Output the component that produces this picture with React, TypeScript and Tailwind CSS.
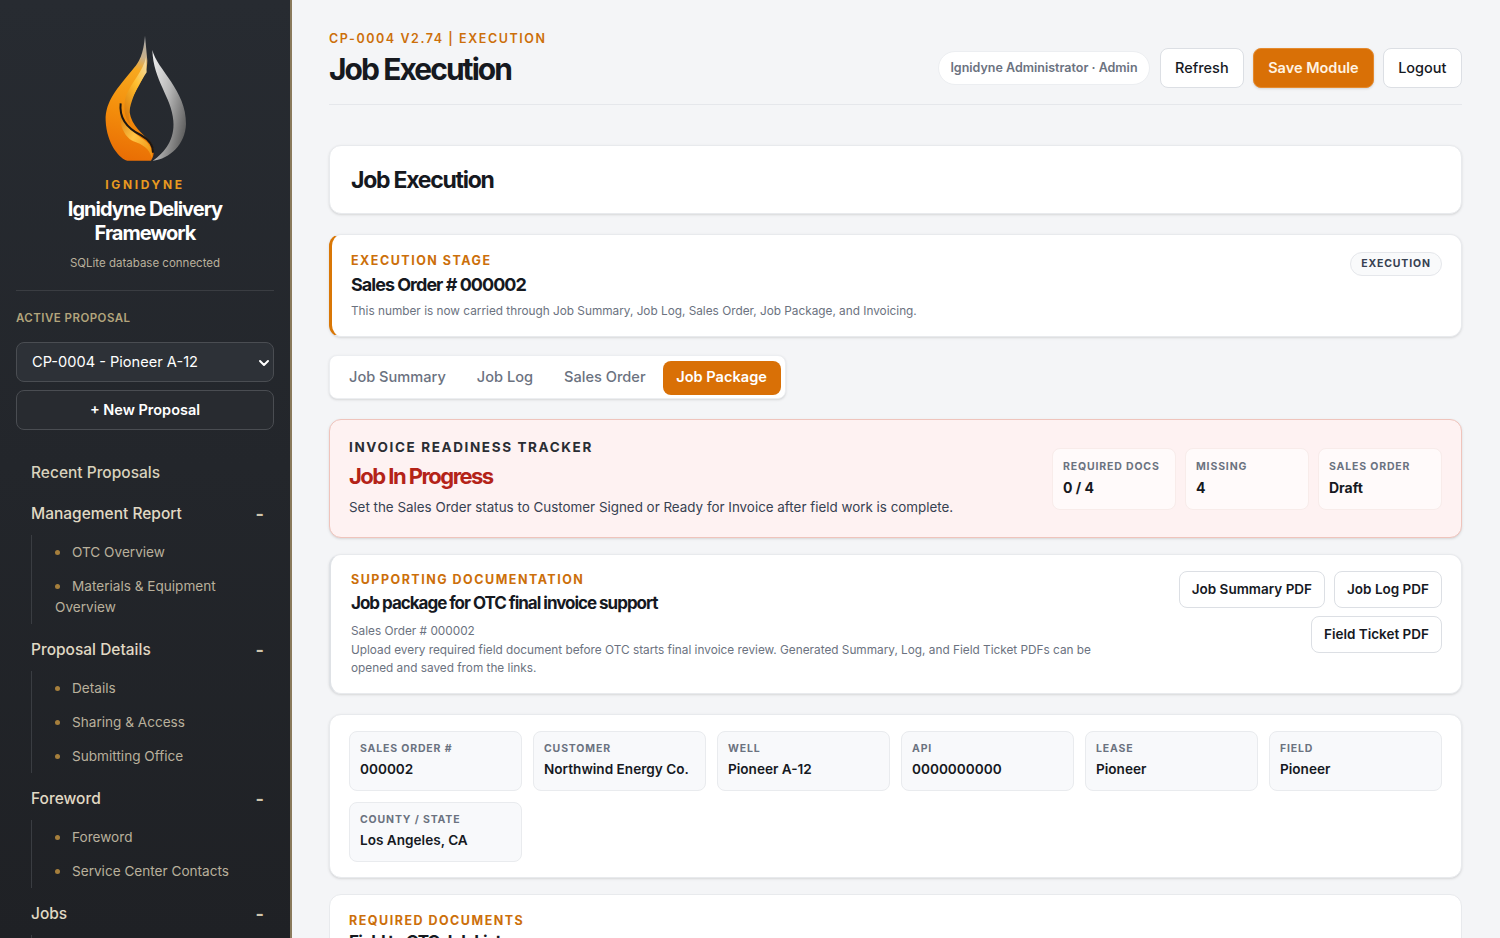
const proposalSections = [
  { title: 'Management Report', items: ['OTC Overview', 'Materials & Equipment Overview'] },
  { title: 'Proposal Details', items: ['Details', 'Sharing & Access', 'Submitting Office'] },
  { title: 'Foreword', items: ['Foreword', 'Service Center Contacts'] },
  { title: 'Jobs', items: ['Job Summary'] },
];

const trackerStats = [
  { label: 'Required Docs', value: '0 / 4' },
  { label: 'Missing', value: '4' },
  { label: 'Sales Order', value: 'Draft' },
];

const jobFacts = [
  { label: 'Sales Order #', value: '000002' },
  { label: 'Customer', value: 'Northwind Energy Co.' },
  { label: 'Well', value: 'Pioneer A-12' },
  { label: 'API', value: '0000000000' },
  { label: 'Lease', value: 'Pioneer' },
  { label: 'Field', value: 'Pioneer' },
  { label: 'County / State', value: 'Los Angeles, CA' },
];

function Logo() {
  return (
    <svg width="110" height="145" viewBox="0 0 330 435" className="block">
      <defs>
        <linearGradient id="flame" x1="0.55" y1="0" x2="0.45" y2="1">
          <stop offset="0" stopColor="#a9a9a9" />
          <stop offset="0.15" stopColor="#c9b08a" />
          <stop offset="0.26" stopColor="#f7a81f" />
          <stop offset="0.6" stopColor="#f48f0c" />
          <stop offset="1" stopColor="#e96d04" />
        </linearGradient>
        <linearGradient id="silver" x1="0" y1="0" x2="1" y2="0.7">
          <stop offset="0" stopColor="#f2f2f2" />
          <stop offset="0.5" stopColor="#b9b9b9" />
          <stop offset="1" stopColor="#5f5f5f" />
        </linearGradient>
        <linearGradient id="band" x1="0" y1="0" x2="1" y2="1">
          <stop offset="0" stopColor="#d47408" />
          <stop offset="0.5" stopColor="#ffc445" />
          <stop offset="1" stopColor="#ee8f0a" />
        </linearGradient>
        <linearGradient id="shine" x1="0.8" y1="0" x2="0.2" y2="1">
          <stop offset="0" stopColor="#f3d9a0" />
          <stop offset="0.4" stopColor="#ffc030" />
          <stop offset="1" stopColor="#d9780a" />
        </linearGradient>
      </defs>
      <path
        d="M187 78C200 135 290 200 288 300C286 360 240 405 188 410C225 385 255 345 250 290C245 220 190 170 187 78Z"
        fill="url(#silver)"
      />
      <path
        d="M165 35C160 90 150 112 125 140C85 190 45 230 47 290C50 360 90 405 112 410L183 410C196 392 194 364 172 344C148 322 116 292 118 250C122 210 172 165 172 110Z"
        fill="url(#flame)"
      />
      <path d="M168 100C160 140 125 175 108 215C98 250 104 285 122 302C108 262 130 205 170 145Z" fill="url(#shine)" />
      <path
        d="M92 250C96 300 130 325 158 345C178 358 190 376 186 404C178 372 158 362 130 352C102 338 84 300 92 250Z"
        fill="url(#band)"
      />
      <path
        d="M92 238C86 290 122 318 152 333C174 345 190 362 189 386"
        fill="none"
        stroke="#1d1712"
        strokeWidth="6"
      />
    </svg>
  );
}

function Sidebar() {
  return (
    <aside className="w-[292px] h-full shrink-0 overflow-hidden bg-gradient-to-b from-[#272b31] to-[#1f2125] border-r-2 border-[#8a7a5c] px-4 pt-[24px]">
      <div className="flex flex-col items-center text-center border-b border-[#3a3d42] pb-[18px]">
        <Logo />
        <div className="mt-[7px] text-xs leading-[18px] font-bold tracking-[0.22em] text-[#e89a20]">IGNIDYNE</div>
        <div className="mt-[3px] w-[200px] text-xl leading-[24px] font-bold tracking-[-0.05em] text-white">
          Ignidyne Delivery Framework
        </div>
        <div className="mt-[9px] text-[11.5px] leading-[18px] text-[#b9b09c]">SQLite database connected</div>
      </div>

      <div className="mt-[20px] text-[11.5px] leading-[14px] font-semibold tracking-[0.04em] text-[#b3a57c]">
        ACTIVE PROPOSAL
      </div>
      <div className="mt-[17px] h-10 w-[258px] rounded-lg border border-[#4a4d52] bg-[#2d3137] flex items-center justify-between pl-[15px] pr-[3px] pt-[1px] text-[14.6px] text-white">
        <span>CP-0004 - Pioneer A-12</span>
        <svg width="12" height="12" viewBox="0 0 12 12" fill="none" stroke="#ffffff" strokeWidth="2" strokeLinecap="round" strokeLinejoin="round">
          <path d="M2 4l4 4 4-4" />
        </svg>
      </div>
      <div className="mt-2 h-10 w-[258px] rounded-lg border border-[#4a4d52] bg-[#282b30] flex items-center justify-center text-[14.5px] font-semibold text-white">
        + New Proposal
      </div>

      <nav className="mt-[31px] pl-[15px] pr-[10px] w-[258px]">
        <div className="mb-[17px] text-[15.5px] leading-6 font-medium text-[#d9d2bd]">Recent Proposals</div>
        {proposalSections.map((section) => (
          <div key={section.title} className="mt-[14px]">
            <div className="flex items-center justify-between text-[15.5px] leading-6 font-medium text-[#e0d9c4]">
              <span>{section.title}</span>
              <span className="text-lg leading-none font-bold text-[#cfc6ae]">-</span>
            </div>
            <ul className="mt-[9px] border-l border-[#3a3d42] pl-[23px]">
              {section.items.map((item) => (
                <li key={item} className="py-[6.5px] text-[13.6px] leading-[21px] text-[#b9b09c]">
                  <span className="inline-block w-[17px] align-middle">
                    <span className="block w-[5px] h-[5px] rounded-full bg-[#a67f3c]" />
                  </span>
                  {item}
                </li>
              ))}
            </ul>
          </div>
        ))}
      </nav>
    </aside>
  );
}

function HeaderButton({ label, primary }: { label: string; primary?: boolean }) {
  return (
    <button
      className={
        primary
          ? 'h-10 px-[14px] rounded-lg bg-[#d97006] border border-[#e58a2e] text-[14.5px] font-semibold text-[#fff3e2] shadow-sm'
          : 'h-10 px-[14.5px] rounded-lg bg-white border border-[#dcdfe4] text-[14.5px] font-medium text-[#16191f]'
      }
    >
      {label}
    </button>
  );
}

function PdfButton({ label }: { label: string }) {
  return (
    <button className="h-[37px] px-[12px] rounded-lg bg-white border border-[#dcdfe4] text-[13.5px] font-semibold text-[#16191f]">
      {label}
    </button>
  );
}

function StatBox({ label, value }: { label: string; value: string }) {
  return (
    <div className="w-[124px] h-[62px] rounded-lg bg-[#fffafa] border border-[#f8ecea] px-[10px] pt-[11px]">
      <div className="text-[10.5px] leading-[14px] font-bold uppercase tracking-[0.08em] text-[#6b7280]">{label}</div>
      <div className="mt-[4px] text-sm leading-5 font-bold text-[#16191f]">{value}</div>
    </div>
  );
}

export default function App() {
  return (
    <div className="h-screen flex overflow-hidden bg-[#f4f5f7] font-['Inter',sans-serif] antialiased">
      <Sidebar />
      <main className="flex-1 min-w-0 h-full overflow-hidden pl-[37px] pr-[38px] pt-[30px]">
        {/* Page header */}
        <header className="flex items-center justify-between h-[75px] border-b border-[#e5e7eb] pb-[17px]">
          <div>
            <div className="text-[12.5px] leading-[17px] font-semibold tracking-[0.125em] text-[#cc6f0a]">
              CP-0004 V2.74 | EXECUTION
            </div>
            <h1 className="mt-[4px] text-3xl leading-9 font-bold tracking-[-0.065em] text-[#16191f]">Job Execution</h1>
          </div>
          <div className="flex items-center gap-[9px] mt-[19px]">
            <div className="h-[34px] px-[11px] rounded-full bg-white border border-[#eceef1] flex items-center text-[12.5px] font-semibold text-[#6b7280] mr-[1px]">
              Ignidyne Administrator · Admin
            </div>
            <HeaderButton label="Refresh" />
            <HeaderButton label="Save Module" primary />
            <HeaderButton label="Logout" />
          </div>
        </header>

        <section className="mt-[40px] h-[69px] rounded-xl bg-white border border-[#e8eaed] shadow-sm flex items-center pt-[1px] px-[21px]">
          <h2 className="text-[23px] font-bold tracking-[-0.055em] text-[#16191f]">Job Execution</h2>
        </section>

        {/* Execution stage */}
        <section className="mt-5 h-[103px] rounded-xl bg-white border border-[#e8eaed] border-l-[3px] border-l-[#d97706] shadow-sm pl-[19px] pr-[19px] pt-[17px] flex justify-between">
          <div>
            <div className="text-[12.5px] leading-[17px] font-bold tracking-[0.12em] text-[#cc6f0a]">EXECUTION STAGE</div>
            <div className="mt-[3px] text-lg leading-[26px] font-bold tracking-[-0.055em] text-[#16191f]">
              Sales Order # 000002
            </div>
            <p className="mt-[3px] text-[11.8px] leading-5 text-[#6b7280]">
              This number is now carried through Job Summary, Job Log, Sales Order, Job Package, and Invoicing.
            </p>
          </div>
          <span className="h-6 w-[92px] rounded-full bg-[#f9fafb] border border-[#e5e7eb] flex items-center justify-center text-[10.5px] font-bold tracking-[0.08em] text-[#374151]">
            EXECUTION
          </span>
        </section>

        {/* Tabs */}
        <div className="mt-[18px] w-[457px] h-[44px] rounded-lg bg-white border border-[#eceef1] shadow-sm flex items-center pl-[19px] pr-1 pt-[1px] whitespace-nowrap text-[14.6px] font-medium text-[#6b7280]">
          <span>Job Summary</span>
          <span className="ml-[31px]">Job Log</span>
          <span className="ml-[31px]">Sales Order</span>
          <span className="ml-[17px] h-[34px] w-[118px] rounded-lg bg-[#d97006] text-white font-semibold flex items-center justify-center">
            Job Package
          </span>
        </div>

        {/* Invoice readiness */}
        <section className="mt-[20px] h-[119px] rounded-xl bg-[#fef2f2] border border-[#efc4bc] shadow-sm pl-[19px] pr-[19px] pt-[18px] flex justify-between">
          <div>
            <div className="text-[13.5px] leading-[18px] font-bold tracking-[0.12em] text-[#2a2d33]">INVOICE READINESS TRACKER</div>
            <div className="mt-[5px] text-[22px] leading-[30px] font-bold tracking-[-0.07em] text-[#b42318]">Job In Progress</div>
            <p className="mt-[5px] text-[13.4px] leading-[22px] text-[#374151]">
              Set the Sales Order status to Customer Signed or Ready for Invoice after field work is complete.
            </p>
          </div>
          <div className="flex gap-[9px] mt-[10px] h-[62px]">
            {trackerStats.map((stat) => (
              <StatBox key={stat.label} label={stat.label} value={stat.value} />
            ))}
          </div>
        </section>

        {/* Supporting documentation */}
        <section className="mt-[16px] h-[140px] rounded-xl bg-white border border-[#e8eaed] border-l-2 border-l-[#dfe2e6] shadow-sm pl-[20px] pr-[19px] pt-[16px] flex justify-between">
          <div className="w-[760px]">
            <div className="text-[12.5px] leading-[17px] font-bold tracking-[0.12em] text-[#cc6f0a]">SUPPORTING DOCUMENTATION</div>
            <div className="mt-[2px] text-[17px] leading-[26px] font-bold tracking-[-0.06em] text-[#16191f]">
              Job package for OTC final invoice support
            </div>
            <p className="mt-[6px] text-[11.8px] leading-[18.5px] text-[#6b7280]">
              Sales Order # 000002
              <br />
              Upload every required field document before OTC starts final invoice review. Generated Summary, Log, and Field Ticket PDFs can be opened and saved from the links.
            </p>
          </div>
          <div className="w-[270px] flex flex-wrap justify-end content-start gap-x-[9px] gap-y-[8px]">
            <PdfButton label="Job Summary PDF" />
            <PdfButton label="Job Log PDF" />
            <PdfButton label="Field Ticket PDF" />
          </div>
        </section>

        {/* Job facts */}
        <section className="mt-5 h-[164px] rounded-xl bg-white border border-[#e8eaed] shadow-sm px-[19px] pt-[16px]">
          <div className="grid grid-cols-6 gap-x-[11px] gap-y-[11px]">
            {jobFacts.map((fact) => (
              <div key={fact.label} className="h-[60px] rounded-lg bg-[#f8f9fb] border border-[#e9ebee] px-[10px] pt-[10px]">
                <div className="text-[10.5px] leading-[14px] font-bold uppercase tracking-[0.08em] text-[#6b7280]">{fact.label}</div>
                <div className="mt-[3px] text-[13.6px] leading-5 font-semibold whitespace-nowrap text-[#16191f]">{fact.value}</div>
              </div>
            ))}
          </div>
        </section>

        {/* Required documents */}
        <section className="mt-4 rounded-t-xl bg-white border border-[#e8eaed] px-[19px] pt-[17px] pb-10">
          <div className="text-[12.5px] leading-[17px] font-bold tracking-[0.12em] text-[#cc6f0a]">REQUIRED DOCUMENTS</div>
          <div className="mt-0 text-[17px] leading-[26px] font-bold tracking-[-0.05em] text-[#16191f]">Field to OTC Job List</div>
        </section>
      </main>
    </div>
  );
}
